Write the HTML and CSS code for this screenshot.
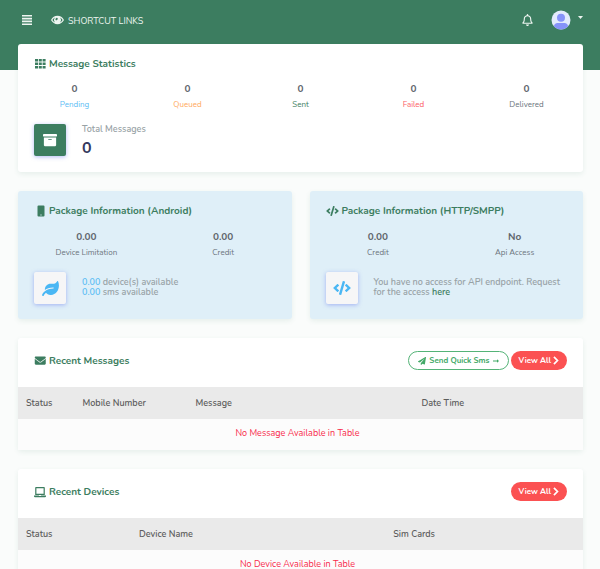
FILE: index.html
```html
<!DOCTYPE html>
<html lang="en">
<head>
<meta charset="utf-8">
<meta name="viewport" content="width=device-width, initial-scale=1">
<title>Dashboard</title>
<link rel="stylesheet" href="styles.css">
</head>
<body>
<svg class="sprite" aria-hidden="true">
  <symbol id="code" viewBox="0 0 640 512"><path d="M278.9 511.5l-61-17.7c-6.4-1.8-10-8.5-8.2-14.9L346.2 8.7c1.8-6.4 8.5-10 14.9-8.2l61 17.7c6.4 1.8 10 8.5 8.2 14.9L293.8 503.3c-1.9 6.4-8.5 10.1-14.9 8.2zm-114-112.2l43.5-46.4c4.6-4.9 4.3-12.7-.8-17.2L117 256l90.6-79.7c5.1-4.5 5.5-12.3.8-17.2l-43.5-46.4c-4.5-4.8-12.1-5.1-17-.5L3.8 247.2c-5.1 4.7-5.1 12.8 0 17.5l144.1 135.1c4.9 4.6 12.5 4.4 17-.5zm327.2.6l144.1-135.1c5.1-4.7 5.1-12.8 0-17.5L492.1 112.1c-4.8-4.5-12.4-4.3-17 .5L431.6 159c-4.6 4.9-4.3 12.7.8 17.2L523 256l-90.6 79.7c-5.1 4.5-5.5 12.3-.8 17.2l43.5 46.4c4.5 4.9 12.1 5.1 17 .6z"/></symbol>
  <symbol id="chevron" viewBox="0 0 320 512"><path stroke="currentColor" stroke-width="24" d="M285.476 272.971L91.132 467.314c-9.373 9.373-24.569 9.373-33.941 0l-22.667-22.667c-9.357-9.357-9.375-24.522-.04-33.901L188.505 256 34.484 101.255c-9.335-9.379-9.317-24.544.04-33.901l22.667-22.667c9.373-9.373 24.569-9.373 33.941 0L285.475 239.03c9.373 9.372 9.373 24.568.001 33.941z"/></symbol>
</svg>

<header class="topbar">
  <nav class="nav">
    <button class="icon-btn menu" aria-label="Toggle menu">
      <svg width="10" height="10" viewBox="0 0 10 10"><path d="M0 0h10v1.600H0zM0 2.800h10v1.600H0zM0 5.600h10v1.600H0zM0 8.400h10V10H0z"/></svg>
    </button>
    <a class="shortcut" href="#">
      <svg width="13" height="10" viewBox="0 0 26 20"><path fill-rule="evenodd" d="M13 1.500C7.500 1.500 2.800 4.700.3 9.400a1.300 1.300 0 0 0 0 1.200C2.800 15.300 7.500 18.500 13 18.500s10.200-3.200 12.700-7.900a1.300 1.300 0 0 0 0-1.200C23.200 4.700 18.500 1.500 13 1.500zM8.300 4.900a7.400 7.400 0 0 0 0 10.200A12.500 12.500 0 0 1 2.800 10a12.500 12.500 0 0 1 5.500-5.100zM17.700 4.900a12.500 12.500 0 0 1 5.500 5.100 12.500 12.500 0 0 1-5.500 5.100 7.400 7.400 0 0 0 0-10.200zM11.500 5.600a2.300 2.300 0 1 1-2.700 3.200 4.500 4.500 0 0 1 2.700-3.200z"/></svg>
      <span>SHORTCUT LINKS</span>
    </a>
    <button class="icon-btn bell" aria-label="Notifications">
      <svg width="11" height="12" viewBox="0 0 448 512"><path d="M439.39 362.29c-19.32-20.76-55.47-51.99-55.47-154.29 0-77.7-54.48-139.9-127.94-155.16V32c0-17.67-14.32-32-31.98-32s-31.98 14.33-31.98 32v20.84C118.56 68.1 64.08 130.3 64.08 208c0 102.3-36.15 133.53-55.47 154.29-6 6.45-8.66 14.16-8.61 21.71.11 16.4 12.98 32 32.1 32h383.8c19.12 0 32-15.6 32.1-32 .05-7.55-2.61-15.27-8.61-21.71zM67.53 368c21.22-27.97 44.42-74.33 44.53-159.42 0-.2-.06-.38-.06-.58 0-61.86 50.14-112 112-112s112 50.14 112 112c0 .2-.06.38-.06.58.11 85.1 23.31 131.46 44.53 159.42H67.53zM224 512c35.32 0 63.97-28.65 63.97-64H160.03c0 35.35 28.65 64 63.97 64z"/></svg>
    </button>
    <button class="icon-btn account" aria-label="Account">
      <svg width="20" height="20" viewBox="0 0 40 40"><defs><clipPath id="round"><circle cx="20" cy="20" r="19"/></clipPath></defs><g clip-path="url(#round)"><path fill="#e2ebfc" d="M0 0h40v40H0z"/><circle cx="20" cy="15.500" r="8" fill="#8693f8"/><path fill="#8693f8" d="M6 40v-7c0-4 3-7 7-7h14c4 0 7 3 7 7v7z"/></g></svg>
      <svg class="caret" width="5" height="3" viewBox="0 0 5 3"><path d="M0 0h5L2.500 3z"/></svg>
    </button>
  </nav>
</header>

<main class="content">
  <section class="card stats">
    <h2 class="title">
      <svg width="12" height="12" viewBox="0 0 12 12"><path d="M1 1h3v2.600H1zM4.800 1h3v2.600h-3zM8.600 1h3v2.600h-3zM1 4.500h3v2.600H1zM4.800 4.500h3v2.600h-3zM8.600 4.500h3v2.600h-3zM1 8h3v2.600H1zM4.800 8h3v2.600h-3zM8.600 8h3v2.600h-3z"/></svg>
      Message Statistics
    </h2>
    <dl class="counts">
      <div><dd>0</dd><dt class="blue">Pending</dt></div>
      <div><dd>0</dd><dt class="orange">Queued</dt></div>
      <div><dd>0</dd><dt class="green">Sent</dt></div>
      <div><dd>0</dd><dt class="red">Failed</dt></div>
      <div><dd>0</dd><dt>Delivered</dt></div>
    </dl>
    <div class="summary">
      <div class="tile solid">
        <svg width="14" height="14" viewBox="0 0 512 512"><path d="M32 448c0 17.700 14.300 32 32 32h384c17.700 0 32-14.300 32-32V160H32v288zm160-212c0-6.600 5.400-12 12-12h104c6.600 0 12 5.400 12 12v8c0 6.600-5.400 12-12 12H204c-6.600 0-12-5.400-12-12v-8zM480 32H32C14.300 32 0 46.300 0 64v48c0 8.800 7.200 16 16 16h480c8.800 0 16-7.200 16-16V64c0-17.700-14.300-32-32-32z"/></svg>
      </div>
      <div>
        <p class="note">Total Messages</p>
        <p class="total">0</p>
      </div>
    </div>
  </section>

  <div class="packages">
    <section class="card package">
      <h2 class="title">
        <svg width="12" height="12" viewBox="0 0 12 12"><path fill-rule="evenodd" d="M4.500.5h5a1 1 0 0 1 1 1v9a1 1 0 0 1-1 1h-5a1 1 0 0 1-1-1v-9a1 1 0 0 1 1-1zM6.400 9.400v1h1.200v-1z"/></svg>
        Package Information (Android)
      </h2>
      <dl class="counts">
        <div><dd>0.00</dd><dt>Device Limitation</dt></div>
        <div><dd>0.00</dd><dt>Credit</dt></div>
      </dl>
      <div class="summary">
        <div class="tile">
          <svg width="17" height="15" viewBox="0 0 576 512"><path d="M546.200 9.700c-5.600-12.500-21.600-13-28.300-1.200C486.900 62.400 431.400 96 368 96h-80C182 96 96 182 96 288c0 7 .8 13.700 1.500 20.500C161.300 262.800 253.400 224 384 224c8.800 0 16 7.200 16 16s-7.200 16-16 16C132.600 256 26 410.100 2.400 468c-6.600 16.300 1.200 34.900 17.500 41.600 16.400 6.800 35-1.100 41.800-17.300 1.500-3.600 20.900-47.900 71.900-90.600 32.400 43.900 94 85.800 174.900 77.200C465.500 467.500 576 326.700 576 154.300c0-50.200-10.800-102.200-29.800-144.600z"/></svg>
        </div>
        <p class="note"><span class="blue">0.00</span> device(s) available<br><span class="blue">0.00</span> sms available</p>
      </div>
    </section>
    <section class="card package">
      <h2 class="title">
        <svg width="13" height="10"><use href="#code"/></svg>
        Package Information (HTTP/SMPP)
      </h2>
      <dl class="counts">
        <div><dd>0.00</dd><dt>Credit</dt></div>
        <div><dd>No</dd><dt>Api Access</dt></div>
      </dl>
      <div class="summary">
        <div class="tile">
          <svg width="18" height="14"><use href="#code"/></svg>
        </div>
        <p class="note">You have no access for API endpoint. Request for the access <a href="#">here</a></p>
      </div>
    </section>
  </div>

  <section class="card listing">
    <div class="listing-head">
      <h2 class="title">
        <svg width="12" height="11" viewBox="-24 0 536 512"><path d="M502.300 190.800c3.900-3.100 9.700-.2 9.700 4.700V400c0 26.500-21.500 48-48 48H48c-26.500 0-48-21.500-48-48V195.600c0-5 5.700-7.800 9.700-4.700 22.400 17.400 52.100 39.500 154.100 113.600 21.100 15.400 56.700 47.800 92.200 47.600 35.700.3 72-32.800 92.300-47.600 102-74.100 131.600-96.300 154-113.700zM256 320c23.200.4 56.600-29.200 73.400-41.400 132.700-96.300 142.800-104.700 173.400-128.700 5.800-4.500 9.200-11.500 9.200-18.900v-19c0-26.500-21.500-48-48-48H48c-26.500 0-48 21.500-48 48v19c0 7.400 3.400 14.300 9.200 18.900 30.600 23.900 40.700 32.400 173.400 128.700 16.800 12.200 50.200 41.800 73.400 41.400z"/></svg>
        Recent Messages
      </h2>
      <a class="btn outline" href="#"><svg width="8" height="8" viewBox="0 0 512 512"><path d="M476 3.200L12.500 270.600c-18.100 10.400-15.800 35.600 2.200 43.200L121 358.400l287.300-253.200c5.500-4.900 13.300 2.600 8.600 8.300L176 407v80.500c0 23.600 28.500 32.900 42.500 15.800L282 426l124.600 52.200c14.200 6 30.400-2.900 33-18.200l72-432C515 7.800 493.300-6.800 476 3.200z"/></svg>Send Quick Sms <svg width="6" height="4" viewBox="0 0 6 4"><path d="M0 1.500h4V.3L6 2 4 3.700V2.500H0z"/></svg></a>
      <a class="btn danger" href="#">View All<svg width="6" height="9"><use href="#chevron"/></svg></a>
    </div>
    <table class="table">
      <colgroup><col class="w10"><col class="w20"><col class="w40"><col class="w30"></colgroup>
      <thead><tr><th>Status</th><th>Mobile Number</th><th>Message</th><th>Date Time</th></tr></thead>
      <tbody><tr><td colspan="4">No Message Available in Table</td></tr></tbody>
    </table>
  </section>

  <section class="card listing">
    <div class="listing-head">
      <h2 class="title">
        <svg width="12" height="12" viewBox="0 0 12 12"><path fill-rule="evenodd" d="M2 1h8a.8.8 0 0 1 .8.800V9H1.200V1.800A.8.8 0 0 1 2 1zM2.400 2.200v5.600h7.200V2.200zM0 9.500h4.800l.4.500h1.600l.4-.5H12v.7a1 1 0 0 1-1 1H1a1 1 0 0 1-1-1z"/></svg>
        Recent Devices
      </h2>
      <a class="btn danger" href="#">View All<svg width="6" height="9"><use href="#chevron"/></svg></a>
    </div>
    <table class="table">
      <colgroup><col class="w20"><col class="w45"><col class="w35"></colgroup>
      <thead><tr><th>Status</th><th>Device Name</th><th>Sim Cards</th></tr></thead>
      <tbody><tr><td colspan="3">No Device Available in Table</td></tr></tbody>
    </table>
  </section>
</main>
</body>
</html>
```
FILE: styles.css
```css
* { box-sizing: border-box; }

body {
  margin: 0;
  background: linear-gradient(#3c7d60 70px, #fafcfb 70px);
  color: #6c757d;
  font: 9px/10px Nunito, "Open Sans", sans-serif;
}

h2, p, dl, dd { margin: 0; }
a { color: inherit; text-decoration: none; }
svg { fill: currentColor; flex: none; }
.sprite { position: absolute; width: 0; height: 0; }

.topbar { color: #eef5f1; }
.nav { display: flex; align-items: center; height: 40px; padding: 0 17px 0 22px; }
.icon-btn { display: flex; padding: 0; border: 0; background: none; color: inherit; cursor: pointer; }
.shortcut { display: flex; align-items: center; gap: 4px; margin: 0 auto 0 19px; }
.shortcut span { padding-top: 2px; }
.account { gap: 7px; margin-left: 18px; }
.caret { margin-top: 6px; }

.content { display: grid; gap: 19px; padding: 4px 17px 19px 18px; }
.card { background: #fff; border-radius: 3px; box-shadow: 0 2px 5px rgba(60, 125, 96, .1); }

.title {
  display: flex;
  align-items: center;
  gap: 3px;
  color: #3c7d60;
  font-size: 10px;
  font-weight: 700;
  line-height: 12px;
}
.stats .title, .package .title { padding: 14px 16px 0; }

.counts { display: flex; padding-top: 14px; text-align: center; }
.counts > div { flex: 1; display: flex; flex-direction: column; gap: 6px; }
.counts dd { color: #5f666d; font-size: 10px; font-weight: 700; }
.counts dt { font-size: 8px; }

.blue { color: #5cbdf4; }
.orange { color: #ffa95c; }
.green { color: #3c7d60; }
.red { color: #fc6066; }

.summary { display: flex; gap: 16px; padding: 14px 16px 15px; }
.tile {
  display: flex;
  align-items: center;
  justify-content: center;
  flex: none;
  width: 32px;
  height: 32px;
  border-radius: 2px;
  background: #f6f6f7;
  color: #4ab7f4;
  box-shadow: 0 1px 4px rgba(103, 119, 239, .5);
}
.solid { background: #3c7d60; color: #fff; }
.note { color: #98a2a6; font-size: 9px; font-weight: 600; }
.note a { color: #3c7d60; }
.total { padding-top: 5px; color: #34395e; font-size: 16px; font-weight: 700; line-height: 18px; }

.packages { display: grid; grid-template-columns: 1fr 1fr; gap: 18px; }
.package { background: #dfeff8; }
.package .counts { padding-top: 15px; }
.package .summary { align-items: center; }
.package .note { padding-bottom: 2px; }

.listing-head { display: flex; align-items: center; gap: 2px; padding: 13px 16px 17px; }
.listing-head .title { margin-right: auto; }
.btn {
  display: flex;
  align-items: center;
  gap: 2px;
  height: 19px;
  padding: 0 7px;
  border: 1px solid transparent;
  border-radius: 10px;
  font-size: 8px;
  font-weight: 700;
}
.danger { background: #fb5152; color: #fff; }
.outline { gap: 3px; padding: 0 9px; border-color: #54b377; color: #43a967; }

.table { width: 100%; border-collapse: collapse; table-layout: fixed; }
.w10 { width: 10%; }
.w20 { width: 20%; }
.w30 { width: 30%; }
.w35 { width: 35%; }
.w40 { width: 40%; }
.w45 { width: 45%; }
th { height: 32px; padding: 0 8px; background: #eaeaea; color: #5c5c5c; font-size: 9px; font-weight: 600; text-align: left; }
td { height: 31px; padding: 0 14px 3px 8px; background: #fcfcfc; color: #f8294a; text-align: center; }
```
